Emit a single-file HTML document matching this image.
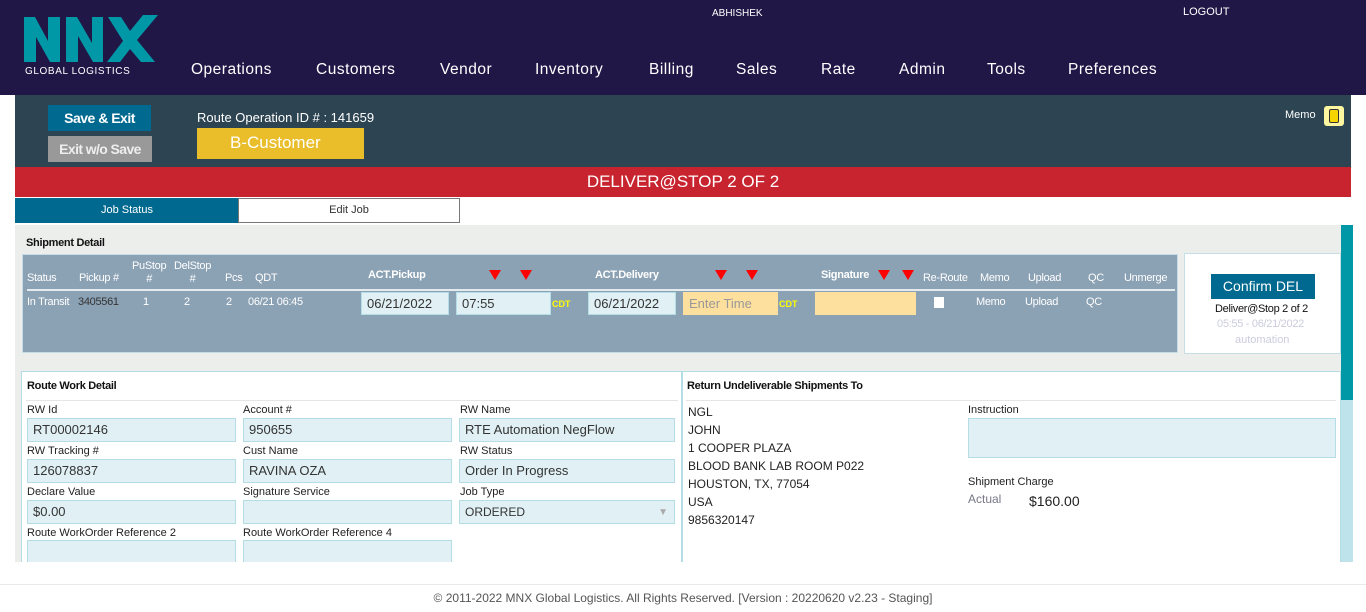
<!DOCTYPE html>
<html><head><meta charset="utf-8"><style>
*{box-sizing:border-box;margin:0;padding:0}
body{width:1366px;height:612px;position:relative;background:#fff;font-family:"Liberation Sans",sans-serif;overflow:hidden;color:#222}
.a{position:absolute;white-space:nowrap}
.hdr{left:0;top:0;width:1366px;height:95px;background:#201747}
.nav{top:61px;color:#fff;font-size:15.5px;letter-spacing:.5px}
.inp{position:absolute;background:#e0f0f4;border:1px solid #b5dde6;font-size:13px;padding:3px 5px;color:#333}
.lbl{font-size:11px;color:#222}
.th{font-size:11px;color:#fff;top:272px;letter-spacing:-.3px}
.td{font-size:11px;color:#fff;top:296px;letter-spacing:-.3px}
.tri{position:absolute;width:0;height:0;border-left:6px solid transparent;border-right:6px solid transparent;border-top:10px solid #f00}
</style></head><body>
<div class="a hdr"></div>
<svg class="a" style="left:24px;top:15px" width="134" height="48" viewBox="0 0 134 48">
<polygon fill="#0097a7" points="0,2 11,2 24,26 24,2 36,2 36,47 26,47 12,22 12,47 0,47"/>
<polygon fill="#0097a7" points="42,2 53,2 68,28 68,2 79,2 79,47 69,47 54,21 54,47 42,47"/>
<polygon fill="#0097a7" points="84,2 97,2 106,16 119,0 134,0 113,25 131,47 117,47 106,34 96,47 83,47 99,26"/>
</svg>
<div class="a" style="left:25px;top:66px;color:#fff;font-size:10px;letter-spacing:.6px">GLOBAL LOGISTICS</div>
<div class="a" style="left:712px;top:8px;color:#fff;font-size:10px">ABHISHEK</div>
<div class="a" style="left:1183px;top:6px;color:#fff;font-size:11px">LOGOUT</div>
<div class="a nav" style="left:191px">Operations</div>
<div class="a nav" style="left:316px">Customers</div>
<div class="a nav" style="left:440px">Vendor</div>
<div class="a nav" style="left:535px">Inventory</div>
<div class="a nav" style="left:649px">Billing</div>
<div class="a nav" style="left:736px">Sales</div>
<div class="a nav" style="left:821px">Rate</div>
<div class="a nav" style="left:899px">Admin</div>
<div class="a nav" style="left:987px">Tools</div>
<div class="a nav" style="left:1068px">Preferences</div>

<div class="a" style="left:15px;top:95px;width:1336px;height:72px;background:#2d4452"></div>
<div class="a" style="left:48px;top:105px;width:103px;height:26px;background:#00698f;color:#fff;font-weight:bold;font-size:14px;text-align:center;line-height:26px;letter-spacing:-.5px">Save &amp; Exit</div>
<div class="a" style="left:48px;top:136px;width:104px;height:26px;background:#999;color:#eee;font-weight:bold;font-size:14px;text-align:center;line-height:26px;letter-spacing:-.6px">Exit w/o Save</div>
<div class="a" style="left:197px;top:110px;color:#fff;font-size:13px">Route Operation ID # : 141659</div>
<div class="a" style="left:197px;top:128px;width:167px;height:31px;background:#e9be2a;color:#fff;font-size:17px;line-height:29px;padding-left:33px">B-Customer</div>
<div class="a" style="left:1285px;top:109px;color:#fff;font-size:11px">Memo</div>
<div class="a" style="left:1324px;top:106px;width:20px;height:20px;background:#fff7a0;border-radius:3px"><div style="margin:3px 5px;width:10px;height:14px;background:#f6d400;border:1px solid #333;border-radius:2px"></div></div>

<div class="a" style="left:15px;top:167px;width:1336px;height:30px;background:#c8242f;color:#fff;font-size:17px;text-align:center;line-height:30px">DELIVER@STOP 2 OF 2</div>
<div class="a" style="left:15px;top:198px;width:224px;height:25px;background:#00698f;color:#fff;font-size:11px;text-align:center;line-height:24px">Job Status</div>
<div class="a" style="left:238px;top:198px;width:222px;height:25px;background:#fff;border:1px solid #777;color:#333;font-size:11px;text-align:center;line-height:22px">Edit Job</div>

<div class="a" style="left:15px;top:225px;width:1326px;height:135px;background:#eceeec"></div>
<div class="a" style="left:26px;top:237px;font-size:11px;font-weight:bold;color:#111;letter-spacing:-.3px">Shipment Detail</div>
<div class="a" style="left:22px;top:254px;width:1156px;height:99px;background:#8ba1b4;border:1px solid #c5dde4"></div>
<div class="a" style="left:27px;top:289px;width:1148px;height:2px;background:#e4ebef"></div>
<div class="a th" style="left:27px">Status</div>
<div class="a th" style="left:79px">Pickup #</div>
<div class="a" style="left:132px;top:260px;font-size:11px;color:#fff;text-align:center;line-height:13px;letter-spacing:-.3px">PuStop<br>#</div>
<div class="a" style="left:174px;top:260px;font-size:11px;color:#fff;text-align:center;line-height:13px;letter-spacing:-.3px">DelStop<br>#</div>
<div class="a th" style="left:225px">Pcs</div>
<div class="a th" style="left:255px">QDT</div>
<div class="a th" style="left:368px;top:269px;font-weight:bold">ACT.Pickup</div>
<div class="tri" style="left:489px;top:270px"></div>
<div class="tri" style="left:520px;top:270px"></div>
<div class="a th" style="left:595px;top:269px;font-weight:bold">ACT.Delivery</div>
<div class="tri" style="left:715px;top:270px"></div>
<div class="tri" style="left:746px;top:270px"></div>
<div class="a th" style="left:821px;top:269px;font-weight:bold">Signature</div>
<div class="tri" style="left:878px;top:270px"></div>
<div class="tri" style="left:902px;top:270px"></div>
<div class="a th" style="left:923px">Re-Route</div>
<div class="a th" style="left:980px">Memo</div>
<div class="a th" style="left:1028px">Upload</div>
<div class="a th" style="left:1088px">QC</div>
<div class="a th" style="left:1124px">Unmerge</div>
<div class="a td" style="left:27px">In Transit</div>
<div class="a td" style="left:78px;color:#333">3405561</div>
<div class="a td" style="left:143px">1</div>
<div class="a td" style="left:184px">2</div>
<div class="a td" style="left:226px">2</div>
<div class="a td" style="left:248px">06/21 06:45</div>
<div class="inp" style="left:361px;top:292px;width:88px;height:23px">06/21/2022</div>
<div class="inp" style="left:456px;top:292px;width:95px;height:23px">07:55</div>
<div class="a" style="left:552px;top:299px;font-size:9px;color:#ff0;font-weight:bold">CDT</div>
<div class="inp" style="left:588px;top:292px;width:88px;height:23px">06/21/2022</div>
<div class="inp" style="left:683px;top:292px;width:95px;height:23px;background:#fde09d;border-color:#fde09d;color:#999">Enter Time</div>
<div class="a" style="left:779px;top:299px;font-size:9px;color:#ff0;font-weight:bold">CDT</div>
<div class="inp" style="left:815px;top:292px;width:101px;height:23px;background:#fde09d;border-color:#fde09d"></div>
<div class="a" style="left:934px;top:297px;width:10px;height:11px;background:#fff"></div>
<div class="a td" style="left:976px">Memo</div>
<div class="a td" style="left:1025px">Upload</div>
<div class="a td" style="left:1086px">QC</div>

<div class="a" style="left:1184px;top:253px;width:157px;height:101px;background:#fff;border:1px solid #c5dde4"></div>
<div class="a" style="left:1211px;top:274px;width:104px;height:25px;background:#00698f;color:#fff;font-size:14px;text-align:center;line-height:25px">Confirm DEL</div>
<div class="a" style="left:1215px;top:303px;font-size:11px;color:#111;letter-spacing:-.3px">Deliver@Stop 2 of 2</div>
<div class="a" style="left:1217px;top:318px;font-size:11px;color:#ccd;letter-spacing:-.3px">05:55 - 06/21/2022</div>
<div class="a" style="left:1235px;top:334px;font-size:11px;color:#ccd">automation</div>
<div class="a" style="left:1341px;top:225px;width:12px;height:175px;background:#0097a7"></div>
<div class="a" style="left:1341px;top:400px;width:12px;height:162px;background:#bfe3ea"></div>

<div class="a" style="left:15px;top:360px;width:1326px;height:202px;background:#eceeec"></div>
<div class="a" style="left:21px;top:371px;width:1320px;height:191px;background:#fff;border:1px solid #b5dde6;border-bottom:none"></div>
<div class="a" style="left:681px;top:371px;width:2px;height:191px;background:#b5dde6"></div>
<div class="a" style="left:26px;top:400px;width:652px;height:1px;background:#e3e6e6"></div>
<div class="a" style="left:686px;top:400px;width:650px;height:1px;background:#e3e6e6"></div>
<div class="a" style="left:27px;top:380px;font-size:11px;font-weight:bold;color:#111;letter-spacing:-.3px">Route Work Detail</div>
<div class="a" style="left:687px;top:380px;font-size:11px;font-weight:bold;color:#111;letter-spacing:-.3px">Return Undeliverable Shipments To</div>

<div class="a lbl" style="left:27px;top:404px">RW Id</div>
<div class="a lbl" style="left:243px;top:404px">Account #</div>
<div class="a lbl" style="left:460px;top:404px">RW Name</div>
<div class="inp" style="left:27px;top:418px;width:209px;height:24px">RT00002146</div>
<div class="inp" style="left:243px;top:418px;width:209px;height:24px">950655</div>
<div class="inp" style="left:459px;top:418px;width:216px;height:24px">RTE Automation NegFlow</div>
<div class="a lbl" style="left:27px;top:445px">RW Tracking #</div>
<div class="a lbl" style="left:243px;top:445px">Cust Name</div>
<div class="a lbl" style="left:460px;top:445px">RW Status</div>
<div class="inp" style="left:27px;top:459px;width:209px;height:24px">126078837</div>
<div class="inp" style="left:243px;top:459px;width:209px;height:24px">RAVINA OZA</div>
<div class="inp" style="left:459px;top:459px;width:216px;height:24px">Order In Progress</div>
<div class="a lbl" style="left:27px;top:486px">Declare Value</div>
<div class="a lbl" style="left:243px;top:486px">Signature Service</div>
<div class="a lbl" style="left:460px;top:486px">Job Type</div>
<div class="inp" style="left:27px;top:500px;width:209px;height:24px">$0.00</div>
<div class="inp" style="left:243px;top:500px;width:209px;height:24px"></div>
<div class="inp" style="left:459px;top:500px;width:216px;height:24px;font-size:12px;padding-top:4px">ORDERED<span style="position:absolute;right:6px;top:6px;color:#aaa;font-size:10px">▼</span></div>
<div class="a lbl" style="left:27px;top:527px">Route WorkOrder Reference 2</div>
<div class="a lbl" style="left:243px;top:527px">Route WorkOrder Reference 4</div>
<div class="inp" style="left:27px;top:540px;width:209px;height:22px;border-bottom:none"></div>
<div class="inp" style="left:243px;top:540px;width:209px;height:22px;border-bottom:none"></div>

<div class="a" style="left:688px;top:403px;font-size:12px;line-height:18px;color:#222">NGL<br>JOHN<br>1 COOPER PLAZA<br>BLOOD BANK LAB ROOM P022<br>HOUSTON, TX, 77054<br>USA<br>9856320147</div>
<div class="a lbl" style="left:968px;top:404px">Instruction</div>
<div class="inp" style="left:968px;top:418px;width:368px;height:40px"></div>
<div class="a lbl" style="left:968px;top:476px">Shipment Charge</div>
<div class="a" style="left:968px;top:492px;font-size:12px;color:#778">Actual</div>
<div class="a" style="left:1029px;top:493px;font-size:14px;color:#222">$160.00</div>

<div class="a" style="left:0;top:584px;width:1366px;height:1px;background:#e8eaea"></div>
<div class="a" style="left:0;top:591px;width:1366px;text-align:center;font-size:12px;color:#555">© 2011-2022 MNX Global Logistics. All Rights Reserved. [Version : 20220620 v2.23 - Staging]</div>
</body></html>
